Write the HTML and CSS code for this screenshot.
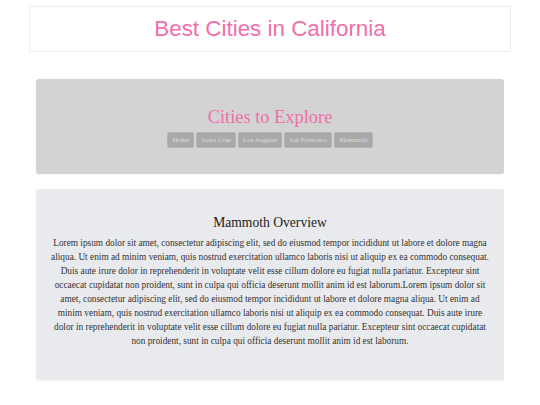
FILE: index.html
```html
<!DOCTYPE html>
<html lang="en">
  <head>
    <meta charset="UTF-8" />
    <meta name="viewport" content="width=device-width, initial-scale=1.0" />
    <title>Best Cities in California</title>
    <link rel="stylesheet" href="styles.css">
  </head>
  <body>
    <header class="site-header">
      <h1>Best Cities in California</h1>
    </header>

    <section class="explore">
      <h2>Cities to Explore</h2>
      <nav class="city-nav">
        <button>Home</button>
        <button>Santa Cruz</button>
        <button>Los Angeles</button>
        <button>San Francisco</button>
        <button>Mammoth</button>
      </nav>
    </section>

    <section class="overview">
      <h3>Mammoth Overview</h3>
      <p>
        Lorem ipsum dolor sit amet, consectetur adipiscing elit, sed do eiusmod tempor incididunt ut labore et dolore magna aliqua. Ut enim ad minim veniam, quis nostrud exercitation ullamco laboris nisi ut aliquip ex ea commodo consequat. Duis aute irure dolor in reprehenderit in voluptate velit esse cillum dolore eu fugiat nulla pariatur. Excepteur sint occaecat cupidatat non proident, sunt in culpa qui officia deserunt mollit anim id est laborum.Lorem ipsum dolor sit amet, consectetur adipiscing elit, sed do eiusmod tempor incididunt ut labore et dolore magna aliqua. Ut enim ad minim veniam, quis nostrud exercitation ullamco laboris nisi ut aliquip ex ea commodo consequat. Duis aute irure dolor in reprehenderit in voluptate velit esse cillum dolore eu fugiat nulla pariatur. Excepteur sint occaecat cupidatat non proident, sunt in culpa qui officia deserunt mollit anim id est laborum.
      </p>
    </section>
  </body>
</html>
```

FILE: styles.css
```css
/* General Page Styling */
body {
  margin: 0;
  padding: 6px 0 20px;
  background-color: #ffffff;
  font-family: "Liberation Serif", "Times New Roman", serif;
  color: #333333;
}

.site-header {
  width: 480px;
  margin: 0 auto;
  border: 1px solid #eeeeee;
}

.site-header h1 {
  margin: 0;
  font-family: "Liberation Sans", Arial, sans-serif;
  font-weight: normal;
  font-size: 22.4px;
  line-height: 44px;
  text-align: center;
  color: #f06eaa;
}

/* Gray boxes */
.explore,
.overview {
  width: 468px;
  margin: 0 auto;
  border-radius: 3px;
  box-shadow: 0 1px 2px rgba(0, 0, 0, 0.05);
  text-align: center;
}

.explore {
  margin-top: 27px;
  padding: 27px 0 26px;
  background-color: #d3d3d3;
}

.explore h2 {
  margin: 0 0 4px;
  font-weight: normal;
  font-size: 18.4px;
  line-height: 22px;
  color: #f06eaa;
}

.city-nav {
  display: flex;
  justify-content: center;
  gap: 2px;
}

.city-nav button {
  padding: 2px 4px;
  font-family: "Liberation Serif", "Times New Roman", serif;
  font-size: 6.8px;
  line-height: 10px;
  background-color: #a9a9a9;
  color: #dcdcdc;
  border: 1px solid #b3b3b3;
  border-radius: 2px;
}

.overview {
  margin-top: 15px;
  padding: 25px 12px 32px;
  box-sizing: border-box;
  background-color: #e9eaee;
}

.overview h3 {
  margin: 0 0 4px;
  font-weight: normal;
  font-size: 13.6px;
  line-height: 18px;
  color: #222222;
}

.overview p {
  margin: 0;
  font-size: 9.3px;
  line-height: 14px;
}
```
